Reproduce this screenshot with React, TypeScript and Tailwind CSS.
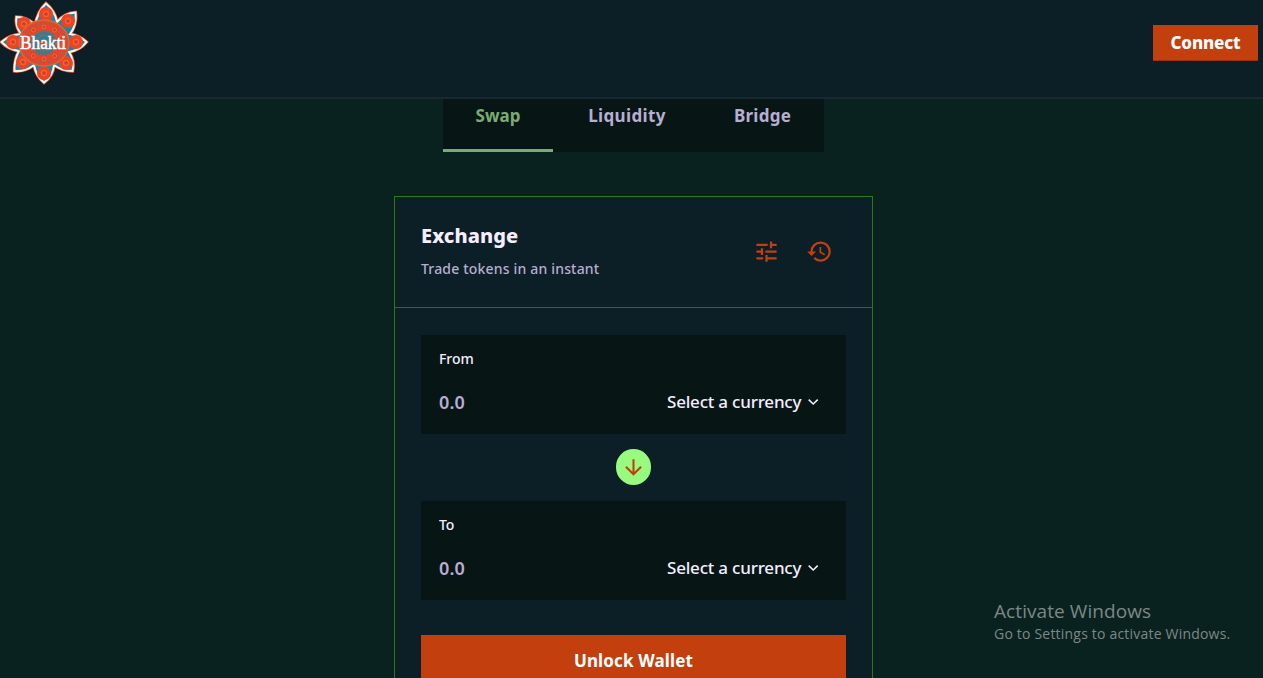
import React from "react";
import { MdTune, MdHistory, MdArrowDownward } from "react-icons/md";

const outline =
  "M35 25Q38 11 46 3.500Q55 11 57 22Q65 13 75.500 12.500Q77 25 70 34Q80 36 86.500 42Q80 50 69 52Q75 61 72.500 71Q62 71 54 65Q53 76 44 82.500Q36 76 34 65Q25 72 14.500 71Q14 60 19 51Q8 49 1.500 42Q10 35 21 34Q15 26 16.500 17Q27 17 35 25Z";

const blooms = [
  [46, 14], [68, 21], [76, 42], [66, 63], [44, 73], [23, 62], [13, 42], [24, 24],
];

const around = (count: number, rx: number, ry: number) =>
  Array.from({ length: count }, (_, i) => {
    const a = ((i + 0.5) * 2 * Math.PI) / count;
    return [44 + rx * Math.cos(a), 43 + ry * Math.sin(a)];
  });

function Logo() {
  return (
    <svg className="h-[86px] w-[90px] shrink-0" viewBox="0 0 90 86">
      <path d={outline} fill="#1687a5" stroke="#e9552d" strokeWidth="3.400" />
      <path d={outline} fill="#1687a5" stroke="#fff5ed" strokeWidth="2" />
      {blooms.map(([x, y], i) => (
        <g key={i}>
          <circle cx={x} cy={y} r="7" fill="#ea4427" />
          <circle cx={x} cy={y} r="2.600" fill="none" stroke="#f2622b" strokeWidth="1.200" />
          <circle cx={x} cy={y} r="1.100" fill="#9b4b44" />
        </g>
      ))}
      <ellipse cx="44" cy="43" rx="25" ry="23" fill="#dd4a30" stroke="#e8622f" strokeWidth="1.500" />
      <ellipse cx="44" cy="43" rx="22" ry="20" fill="none" stroke="#2f809a" strokeWidth="1" strokeDasharray="1.500 3" />
      {around(10, 18, 16).map(([x, y], i) => (
        <g key={i}>
          <circle cx={x} cy={y} r="3.800" fill="#e7402b" />
          <circle cx={x} cy={y} r="2" fill="none" stroke="#ef6a2e" strokeWidth="1" />
          <circle cx={x} cy={y} r=".8" fill="#8f4a48" />
        </g>
      ))}
      <ellipse cx="44" cy="43" rx="13.500" ry="12.500" fill="#26839c" />
      <circle cx="44" cy="43" r="12" fill="none" stroke="#c9523c" strokeWidth="2" strokeDasharray="2 1.500" />
      <circle cx="44" cy="43" r="8" fill="none" stroke="#c9523c" strokeWidth="2" strokeDasharray="1.500 1.500" />
      <circle cx="44" cy="43" r="4" fill="#c9523c" />
      <text x="20" y="48.500" textLength="46" lengthAdjust="spacingAndGlyphs" fill="#fff" stroke="#fff" strokeWidth=".5" fontFamily="Liberation Serif, serif" fontSize="18.500">Bhakti</text>
    </svg>
  );
}

function Amount({ label }: { label: string }) {
  return (
    <div className="h-[99px] bg-[#071615] pl-[18px] pr-[27px] pt-[14px]">
      <div className="h-[20px] text-[14px] font-medium leading-[20px] tracking-[-0.050px] text-[#f4eeff]">{label}</div>
      <div className="mt-[20px] flex h-[26px] items-center justify-between">
        <span className="text-[18px] font-semibold leading-[24px] tracking-[0.100px] text-[#b8add2]">0.0</span>
        <div className="flex items-center text-[#f4eeff]">
          <span className="w-[141px] whitespace-nowrap text-[17px] font-medium tracking-[-0.200px]">Select a currency</span>
          <svg className="h-[8px] w-[11px]" viewBox="0 0 11 8" fill="none" stroke="currentColor" strokeWidth="1.600"><path d="M.7 1.700L5.200 6L9.700 1.700" /></svg>
        </div>
      </div>
    </div>
  );
}

export default function App() {
  return (
    <div className="relative h-[678px] w-full overflow-hidden bg-[#0a221f] font-['Noto_Sans',sans-serif]">
      <header className="flex h-[99px] items-start justify-between border-b-2 border-[#1a2830] bg-[#0d1f26] pr-[5px]">
        <Logo />
        <button className="mt-[25px] h-[36px] w-[105px] border-b border-[#9b320b] bg-[#c33f0e] text-[17px] font-extrabold tracking-[-0.150px] text-white">Connect</button>
      </header>
      <main className="flex flex-col items-center pl-[4px]">
        <nav className="flex h-[53px] w-[381px] bg-[#071615] text-[17px] font-bold leading-[33px] text-[#b8add2]">
          <div className="w-[110px] border-b-3 border-[#7bab72] text-center text-[#7bab72]">Swap</div>
          <div className="w-[148px] text-center tracking-[0.350px]">Liquidity</div>
          <div className="w-[123px] text-center tracking-[0.250px]">Bridge</div>
        </nav>
        <section className="mt-[44px] h-[520px] w-[479px] shrink-0 border border-[#2b7a14] bg-[#0d1f26]">
          <div className="flex h-[111px] justify-between border-b border-[#524b63] pl-[26px] pr-[39px] pt-[24px]">
            <div>
              <h1 className="text-[20px] font-extrabold leading-[30px] tracking-[0.050px] text-[#f4eeff]">Exchange</h1>
              <p className="mt-[8px] text-[14px] font-medium leading-[20px] tracking-[0.180px] text-[#b8add2]">Trade tokens in an instant</p>
            </div>
            <div className="flex items-start gap-[26px] pt-[17px] text-[#c33f0e]">
              <MdTune size={27} />
              <MdHistory size={27} />
            </div>
          </div>
          <div className="px-[26px] pt-[27px]">
            <Amount label="From" />
            <div className="flex h-[67px] items-start justify-center pt-[15px]">
              <div className="flex h-[36px] w-[35px] items-center justify-center rounded-full bg-[#98fb80] text-[#c33f0e]"><MdArrowDownward size={25} /></div>
            </div>
            <Amount label="To" />
            <button className="mt-[35px] h-[52px] w-full bg-[#c33f0e] text-[17px] font-bold tracking-[0.150px] text-white">Unlock Wallet</button>
          </div>
        </section>
      </main>
      <aside className="absolute left-[994px] top-[598px] whitespace-nowrap font-['Open_Sans',sans-serif] text-[#7c8886]">
        <div className="text-[19px] leading-[26px] tracking-[0.080px]">Activate Windows</div>
        <div className="text-[14px] leading-[20px] tracking-[0.200px]">Go to Settings to activate Windows.</div>
      </aside>
    </div>
  );
}
